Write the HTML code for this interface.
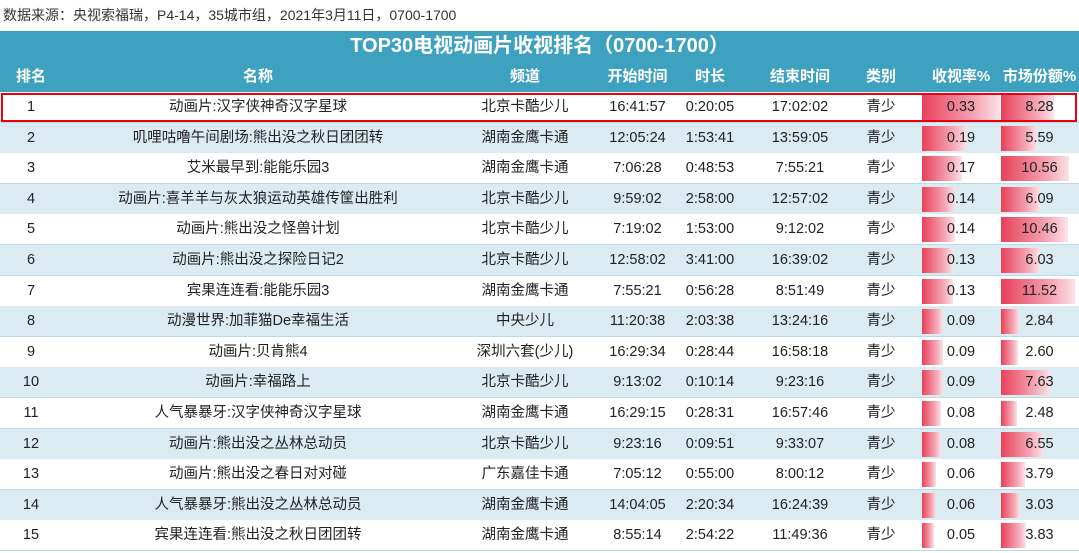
<!DOCTYPE html>
<html><head><meta charset="utf-8"><style>
*{margin:0;padding:0;box-sizing:border-box}
body{width:1079px;height:553px;background:#fff;font-family:"Liberation Sans","Noto Sans CJK SC",sans-serif;color:#222;position:relative;overflow:hidden}
.cap{position:absolute;left:3px;top:5px;font-size:14px;color:#333}
.title{position:absolute;left:0;top:31px;width:1079px;height:31px;background:#3ea1bf;color:#fff;font-weight:bold;font-size:20px;text-align:center;line-height:31px}
.hdr{position:absolute;left:0;top:62px;width:1079px;height:30px;background:#3ea1bf;color:#fff;font-weight:bold;font-size:15px}
.row{position:absolute;left:0;width:1079px;height:31px;border-bottom:1px solid #b9dbe6;font-size:14.5px}
.c{position:absolute;top:0;height:30px;line-height:30px;text-align:center;white-space:nowrap}
.bar{position:absolute;top:3px;height:25px;background:linear-gradient(to right,#e8405a,#f5a9b7 70%,#fbe3e8)}
.box{position:absolute;left:1px;top:93px;width:1076px;height:29px;border:2.5px solid #e8000f}
</style></head><body>
<div class="cap">数据来源：央视索福瑞，P4-14，35城市组，2021年3月11日，0700-1700</div>
<div class="title">TOP30电视动画片收视排名（0700-1700）</div>
<div class="hdr">
<div class="c" style="left:0;width:62px">排名</div>
<div class="c" style="left:62px;width:392px">名称</div>
<div class="c" style="left:455px;width:140px">频道</div>
<div class="c" style="left:595px;width:85px">开始时间</div>
<div class="c" style="left:680px;width:60px">时长</div>
<div class="c" style="left:740px;width:120px">结束时间</div>
<div class="c" style="left:850px;width:62px">类别</div>
<div class="c" style="left:922px;width:78px">收视率%</div>
<div class="c" style="left:1000px;width:79px">市场份额%</div>
</div>
<div id="rows"></div>
<script>
var d=[
[1,"动画片:汉字侠神奇汉字星球","北京卡酷少儿","16:41:57","0:20:05","17:02:02","0.33","8.28"],
[2,"叽哩咕噜午间剧场:熊出没之秋日团团转","湖南金鹰卡通","12:05:24","1:53:41","13:59:05","0.19","5.59"],
[3,"艾米最早到:能能乐园3","湖南金鹰卡通","7:06:28","0:48:53","7:55:21","0.17","10.56"],
[4,"动画片:喜羊羊与灰太狼运动英雄传筐出胜利","北京卡酷少儿","9:59:02","2:58:00","12:57:02","0.14","6.09"],
[5,"动画片:熊出没之怪兽计划","北京卡酷少儿","7:19:02","1:53:00","9:12:02","0.14","10.46"],
[6,"动画片:熊出没之探险日记2","北京卡酷少儿","12:58:02","3:41:00","16:39:02","0.13","6.03"],
[7,"宾果连连看:能能乐园3","湖南金鹰卡通","7:55:21","0:56:28","8:51:49","0.13","11.52"],
[8,"动漫世界:加菲猫De幸福生活","中央少儿","11:20:38","2:03:38","13:24:16","0.09","2.84"],
[9,"动画片:贝肯熊4","深圳六套(少儿)","16:29:34","0:28:44","16:58:18","0.09","2.60"],
[10,"动画片:幸福路上","北京卡酷少儿","9:13:02","0:10:14","9:23:16","0.09","7.63"],
[11,"人气暴暴牙:汉字侠神奇汉字星球","湖南金鹰卡通","16:29:15","0:28:31","16:57:46","0.08","2.48"],
[12,"动画片:熊出没之丛林总动员","北京卡酷少儿","9:23:16","0:09:51","9:33:07","0.08","6.55"],
[13,"动画片:熊出没之春日对对碰","广东嘉佳卡通","7:05:12","0:55:00","8:00:12","0.06","3.79"],
[14,"人气暴暴牙:熊出没之丛林总动员","湖南金鹰卡通","14:04:05","2:20:34","16:24:39","0.06","3.03"],
[15,"宾果连连看:熊出没之秋日团团转","湖南金鹰卡通","8:55:14","2:54:22","11:49:36","0.05","3.83"]];
var h="";
d.forEach(function(r,i){
var top=92+i*30.6,bg=i%2?"#daebf1":"#fff";
var rw=parseFloat(r[6])/0.33*78,sw=parseFloat(r[7])/11.52*74;
h+='<div class="row" style="top:'+top+'px;background:'+bg+'">'+
'<div class="c" style="left:0;width:62px">'+r[0]+'</div>'+
'<div class="c" style="left:62px;width:392px">'+r[1]+'</div>'+
'<div class="c" style="left:455px;width:140px">'+r[2]+'</div>'+
'<div class="c" style="left:595px;width:85px">'+r[3]+'</div>'+
'<div class="c" style="left:680px;width:60px">'+r[4]+'</div>'+
'<div class="c" style="left:740px;width:120px">'+r[5]+'</div>'+
'<div class="c" style="left:850px;width:62px">青少</div>'+
'<div class="bar" style="left:922px;width:'+rw+'px"></div>'+
'<div class="bar" style="left:1001px;width:'+sw+'px"></div>'+
'<div class="c" style="left:922px;width:78px">'+r[6]+'</div>'+
'<div class="c" style="left:1000px;width:79px">'+r[7]+'</div></div>';});
document.getElementById("rows").innerHTML=h;
</script>
<div class="box"></div>
</body></html>
